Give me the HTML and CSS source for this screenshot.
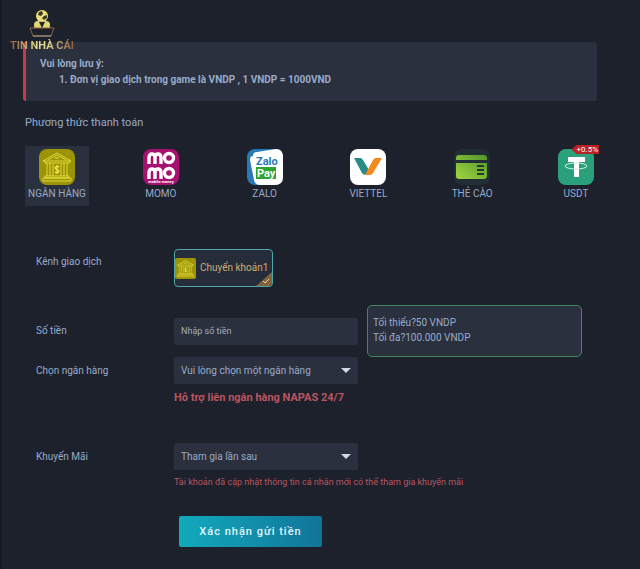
FILE: index.html
```html
<!DOCTYPE html>
<html lang="vi">
<head>
  <meta charset="UTF-8" />
  <meta name="viewport" content="width=device-width, initial-scale=1" />
  <title>Nạp tiền</title>
  <link rel="stylesheet" href="styles.css">
</head>
<body>
  <a class="logo" href="#">
    <svg width="26" height="29" viewBox="0 0 26 29">
      <path d="M4 19l5-4 4 3 4-3 5 4z" fill="#b99b47"/>
      <circle cx="13" cy="7" r="6" fill="#e9df7c"/>
      <path d="M10 3l3-1 1 3-2 2-3-1zM15 7l3-1v3l-3 2-2-2z" fill="#3c3826"/>
      <circle cx="9" cy="16" r="4" fill="#e3d774"/>
      <circle cx="17" cy="16" r="4" fill="#e3d774"/>
      <path d="M10 13h6l-3 6z" fill="#242430"/>
      <path d="M1 19h24l-3 8H4z" fill="#1d1f2b" stroke="#8a6842"/>
      <path d="M4 27h18" stroke="#a9a18c"/>
    </svg>
    <span class="logo-text">TIN NHÀ CÁI</span>
  </a>

  <main>
    <section class="notice">
      <p>Vui lòng lưu ý:</p>
      <ol>
        <li>Đơn vị giao dịch trong game là VNDP , 1 VNDP = 1000VND</li>
      </ol>
    </section>

    <h2>Phương thức thanh toán</h2>

    <div class="methods">
      <button type="button" class="method active">
        <svg class="method-icon" viewBox="0 0 36 36">
          <rect width="36" height="36" rx="8" fill="#9b9408"/>
          <g id="bank" fill="none" stroke="#f3ea43" stroke-width=".8">
            <path d="M4 12L18 4l14 8zM9 11l9-5 9 5M6 12v2h24v-2M8 14v13M11 14v13M25 14v13M28 14v13M6 27h24v2H6zM4 29h28v3H4zM14 27V15M22 15v12"/>
            <path d="M20 18c-1-1-4-1-4 1s4 1 4 3-3 2-4 1M18 16v9M16 9h4" stroke-width="1.2"/>
          </g>
        </svg>
        <span>NGÂN HÀNG</span>
      </button>

      <button type="button" class="method">
        <svg class="method-icon" viewBox="0 0 36 36">
          <rect width="36" height="36" rx="8" fill="#a6106f"/>
          <g fill="none" stroke="#fff" stroke-width="3.4">
            <path d="M6 15V9q0-4 3-4t3 4v6M12 9q0-4 3-4t3 4v6"/>
            <circle cx="26" cy="9" r="4.500"/>
            <path d="M6 30v-6q0-4 3-4t3 4v6M12 24q0-4 3-4t3 4v6"/>
            <circle cx="26" cy="24" r="4.500"/>
          </g>
          <text x="18" y="34" class="momo-text">mobile money</text>
        </svg>
        <span>MOMO</span>
      </button>

      <button type="button" class="method">
        <svg class="method-icon" viewBox="0 0 36 36">
          <rect width="36" height="36" rx="8" fill="#2879b7"/>
          <path d="M6 7q0-4 4-4L29 0q7 0 7 8v20q0 8-8 8H13q-5 0-6-5L3 11q0-4 3-4z" fill="#fff"/>
          <rect x="9" y="18" width="20" height="12" fill="#2ba52f"/>
          <text x="9" y="16" class="zalo-text zalo-blue">Zalo</text>
          <text x="10" y="28" class="zalo-text zalo-white">Pay</text>
        </svg>
        <span>ZALO</span>
      </button>

      <button type="button" class="method">
        <svg class="method-icon" viewBox="0 0 36 36">
          <rect width="36" height="36" rx="8" fill="#fff"/>
          <path d="M4 9h6q2 0 3 2l6 10-3 4q-2 2-4-1z" fill="#288b88"/>
          <path d="M32 9h-6q-2 0-3 2l-8 15h5q2 0 3-2z" fill="#f38b1c"/>
        </svg>
        <span>VIETTEL</span>
      </button>

      <button type="button" class="method">
        <svg class="method-icon" viewBox="0 0 36 36">
          <defs>
            <linearGradient id="card" x1="0" y1="1" x2="1" y2="0">
              <stop offset="0" stop-color="#a0d63f"/>
              <stop offset="1" stop-color="#51962d"/>
            </linearGradient>
          </defs>
          <rect width="36" height="36" rx="8" fill="#222e36"/>
          <path d="M2 11V9q0-3 3-3h25q3 0 3 3v2zM2 14h31v13q0 3-3 3H5q-3 0-3-3z" fill="url(#card)"/>
          <path d="M23 17h7M23 21h7M23 25h7" stroke="#24382f" stroke-width="2"/>
        </svg>
        <span>THẺ CÀO</span>
      </button>

      <button type="button" class="method">
        <svg class="method-icon" viewBox="0 0 36 36">
          <rect width="36" height="36" rx="8" fill="#2ba17b"/>
          <path d="M10 8h17v5h-6v15h-5V13h-6z" fill="#fff"/>
          <ellipse cx="18" cy="17" rx="11" ry="3" fill="none" stroke="#d4f1e6"/>
        </svg>
        <span>USDT</span>
        <span class="badge">+0.5%</span>
      </button>
    </div>

    <form class="deposit">
      <div class="row row-channel">
        <span class="label">Kênh giao dịch</span>
        <button type="button" class="channel">
          <svg class="channel-icon" viewBox="0 0 36 36">
            <rect width="36" height="36" rx="3" fill="#9b9408"/>
            <use href="#bank"/>
          </svg>
          <span>Chuyển khoản1</span>
          <svg class="tick" viewBox="0 0 16 14">
            <path d="M0 14L16 0v14z" fill="#80643f"/>
            <path d="M7 9l2 2 4-4" fill="none" stroke="#f0cf87"/>
          </svg>
        </button>
      </div>

      <div class="row row-amount">
        <label class="label" for="amount">Số tiền</label>
        <input id="amount" class="field" type="text" placeholder="Nhập số tiền">
        <p class="limits">Tối thiểu?50 VNDP<br>Tối đa?100.000 VNDP</p>
      </div>

      <div class="row">
        <label class="label" for="bank-select">Chọn ngân hàng</label>
        <div class="select-wrap">
          <select id="bank-select" class="field">
            <option>Vui lòng chọn một ngân hàng</option>
          </select>
        </div>
      </div>
      <p class="hint napas">Hỗ trợ liên ngân hàng NAPAS 24/7</p>

      <div class="row">
        <label class="label" for="promo">Khuyến Mãi</label>
        <div class="select-wrap">
          <select id="promo" class="field">
            <option>Tham gia lần sau</option>
          </select>
        </div>
      </div>
      <p class="hint">Tài khoản đã cập nhật thông tin cá nhân mới có thể tham gia khuyến mãi</p>

      <button type="submit" class="submit">Xác nhận gửi tiền</button>
    </form>
  </main>
</body>
</html>
```
FILE: styles.css
```css
* {
  box-sizing: border-box;
}
body {
  margin: 0;
  min-height: 100vh;
  border-left: 2px solid #151923;
  background: #1d212c;
  color: #99abc9;
  font: 10px/16px Roboto, "Noto Sans", sans-serif;
}
p, h2, ol {
  margin: 0;
}
button, input, select {
  font: inherit;
  color: inherit;
}
main {
  padding: 42px 32px 20px 21px;
}

/* logo hangs over the corner of the notice */
.logo {
  position: absolute;
  top: 9px;
  left: 10px;
  display: flex;
  flex-direction: column;
  align-items: center;
  text-decoration: none;
}
.logo-text {
  font-size: 11px;
  font-weight: bold;
  background: linear-gradient(90deg, #8f5a3c, #e0d98f 40%, #e0d98f 60%, #8f5a3c);
  background-clip: text;
  color: transparent;
}

.notice {
  min-height: 59px;
  margin-right: 11px;
  padding: 14px 14px 12px;
  border-left: 3px solid #cb384c;
  border-radius: 3px;
  background: #2a303d;
  font-weight: bold;
}
.notice ol {
  padding-left: 30px;
}
h2 {
  margin: 14px 2px 15px;
  font-size: 11px;
  font-weight: normal;
}

.methods {
  display: flex;
  justify-content: space-between;
  padding-left: 2px;
}
.method {
  position: relative;
  display: flex;
  flex-direction: column;
  align-items: center;
  gap: 1px;
  width: 64px;
  height: 60px;
  padding: 3px 0 0;
  border: 0;
  background: none;
  white-space: nowrap;
}
.method.active {
  background: #2a303d;
}
.method-icon {
  width: 36px;
  height: 36px;
  flex: none;
}
.momo-text {
  font: bold 4px Roboto, sans-serif;
  fill: #fff;
  text-anchor: middle;
}
.zalo-text {
  font: bold 11px Roboto, sans-serif;
}
.zalo-blue {
  fill: #2879b7;
}
.zalo-white {
  fill: #fff;
}
.badge {
  position: absolute;
  top: -1px;
  right: 9px;
  padding: 0 1px 0 5px;
  background: #bb2026;
  clip-path: polygon(5px 0, 100% 0, 100% 100%, 5px 100%, 0 50%);
  color: #fff;
  font-size: 8px;
  line-height: 9px;
}

.deposit {
  padding: 43px 0 0 13px;
}
.row {
  display: grid;
  grid-template-columns: 138px 184px minmax(0, 215px);
  align-items: center;
}
.row-channel {
  margin-bottom: 18px;
}
.row-channel .label {
  align-self: start;
  margin-top: 5px;
}
.channel {
  position: relative;
  display: flex;
  align-items: center;
  gap: 4px;
  width: 99px;
  height: 38px;
  padding: 0;
  border: 1px solid #4fa6a8;
  border-radius: 4px;
  background: #252c3a;
  color: #d0ac78;
  white-space: nowrap;
}
.channel-icon {
  width: 21px;
  height: 21px;
  flex: none;
}
.tick {
  position: absolute;
  right: 0;
  bottom: 0;
  width: 16px;
  height: 14px;
}
.field {
  width: 100%;
  height: 27px;
  padding: 0 7px;
  border: 0;
  border-radius: 2px;
  background: #2a303d;
}
input.field {
  font-size: 9px;
}
.field::placeholder {
  color: #a5aebd;
}
.limits {
  height: 52px;
  margin-left: 9px;
  margin-right: -9px;
  padding: 9px 5px;
  border: 1px solid #42885f;
  border-radius: 5px;
  background: #2a303d;
  line-height: 15px;
}
.select-wrap {
  position: relative;
}
.select-wrap select {
  appearance: none;
}
.select-wrap::after {
  content: "";
  position: absolute;
  top: 11px;
  right: 7px;
  border: 5px solid transparent;
  border-top-color: #d3d9e3;
  border-bottom: 0;
  pointer-events: none;
}
.hint {
  margin: 4px 0 0 138px;
  color: #b95560;
  font-size: 9px;
}
.hint.napas {
  margin-top: 6px;
  margin-bottom: 37px;
  font-size: 11px;
  font-weight: bold;
}
.submit {
  width: 143px;
  height: 31px;
  margin: 26px 0 0 143px;
  padding: 0;
  border: 0;
  border-radius: 2px;
  background: linear-gradient(90deg, #12aabd, #117499);
  color: #e4f5fa;
  font-size: 11px;
  font-weight: 500;
  letter-spacing: 1px;
}
```
